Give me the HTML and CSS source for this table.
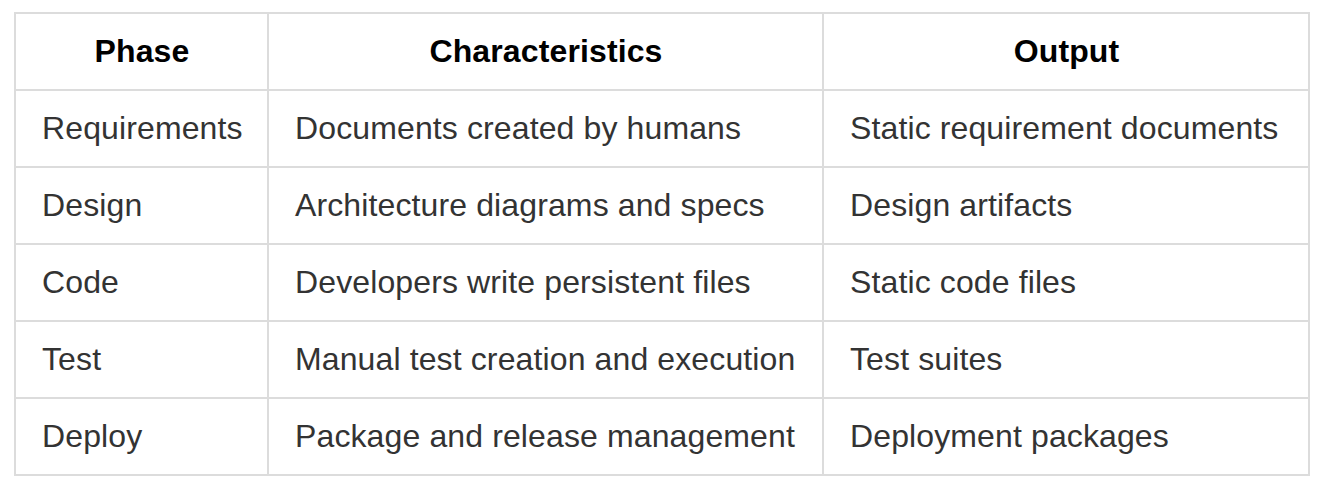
FILE: index.html
```html
<!DOCTYPE html>
<html>
<head>
<meta charset="utf-8">
<link rel="stylesheet" href="styles.css">
</head>
<body>
<table class="phases">
  <colgroup>
    <col class="c1">
    <col class="c2">
    <col class="c3">
  </colgroup>
  <thead>
    <tr><th>Phase</th><th>Characteristics</th><th>Output</th></tr>
  </thead>
  <tbody>
    <tr><td>Requirements</td><td>Documents created by humans</td><td>Static requirement documents</td></tr>
    <tr><td>Design</td><td>Architecture diagrams and specs</td><td>Design artifacts</td></tr>
    <tr><td>Code</td><td>Developers write persistent files</td><td>Static code files</td></tr>
    <tr><td>Test</td><td>Manual test creation and execution</td><td>Test suites</td></tr>
    <tr><td>Deploy</td><td>Package and release management</td><td>Deployment packages</td></tr>
  </tbody>
</table>
</body>
</html>
```

FILE: styles.css
```css
html, body {
  margin: 0;
  padding: 0;
  background: #ffffff;
}
body {
  padding: 12px 0 0 14px;
  font-family: "Liberation Sans", Arial, Helvetica, sans-serif;
}
.phases {
  border-collapse: collapse;
  table-layout: fixed;
  width: 1294px;
  font-size: 32px;
  line-height: 51px;
  letter-spacing: 0.12px;
}
.c1 { width: 253px; }
.c2 { width: 555px; }
.c3 { width: 486px; }
.phases th,
.phases td {
  border: 2px solid #dcdcdc;
  padding: 12px 25px 12px 26px;
  vertical-align: middle;
  white-space: nowrap;
}
.phases th {
  font-weight: bold;
  color: #000000;
  text-align: center;
}
.phases td {
  color: #333333;
  text-align: left;
}
```
